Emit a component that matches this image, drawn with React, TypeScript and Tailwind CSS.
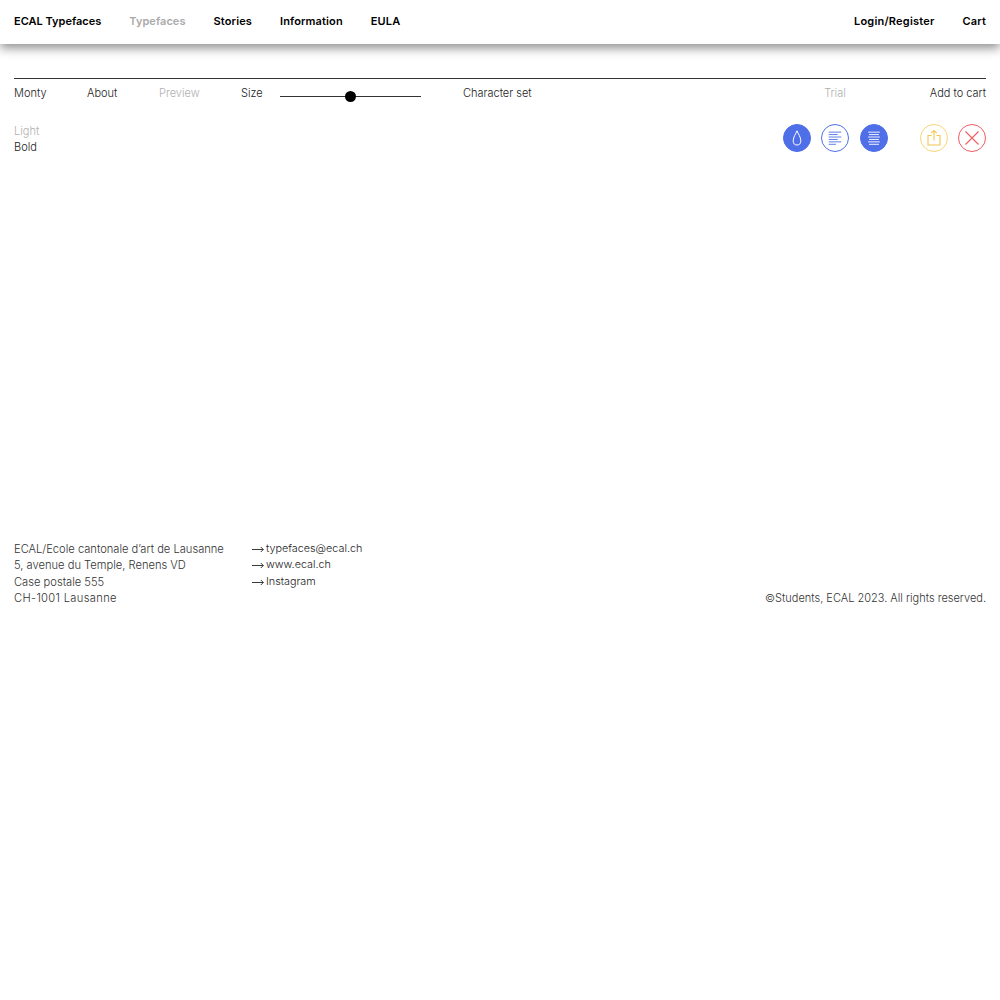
const font = "[font-family:Inter,'Liberation_Sans',sans-serif]";

function NavBar() {
  return (
    <header className="flex h-[44px] items-center justify-between bg-white px-[14px] pb-[2px] text-[11px] font-semibold tracking-[0.012em] text-black shadow-[0_4px_10px_rgba(0,0,0,0.45)]">
      <nav className="flex gap-[28px]">
        <span className="tracking-normal">ECAL Typefaces</span>
        <span className="tracking-[0.005em] text-[#aaaaaa]">Typefaces</span>
        <span>Stories</span>
        <span>Information</span>
        <span>EULA</span>
      </nav>
      <nav className="flex gap-[28px]">
        <span className="tracking-[0.02em]">Login/Register</span>
        <span>Cart</span>
      </nav>
    </header>
  );
}

function Slider() {
  return (
    <div className="relative ml-[17px] mt-[6px] h-px w-[141px] bg-[#333333]">
      <span className="absolute left-[65px] top-[-5px] size-[11px] rounded-full bg-black" />
    </div>
  );
}

function RoundButton({ filled, color, children }: { filled?: boolean; color: string; children: React.ReactNode }) {
  return (
    <button
      type="button"
      className="grid size-[28px] place-items-center rounded-full border"
      style={{ borderColor: color, backgroundColor: filled ? color : 'transparent' }}
    >
      {children}
    </button>
  );
}

function Lines({ color, centered }: { color: string; centered?: boolean }) {
  const rows = centered
    ? ['M3.5 3.5h13', 'M4.5 6.2h11', 'M3.5 8.9h13', 'M4.5 11.6h11', 'M3.5 14.3h13', 'M4.5 17h11']
    : ['M3 3.5h14', 'M3 6.2h10', 'M3 8.9h14', 'M3 11.6h10', 'M3 14.3h14', 'M3 17h8'];
  return (
    <svg className="size-[18px]" viewBox="0 0 20 20" fill="none" stroke={color} strokeWidth="1">
      {rows.map((d) => (
        <path d={d} key={d} />
      ))}
    </svg>
  );
}

function LinkRow({ children }: { children: React.ReactNode }) {
  return (
    <p className="flex">
      <svg className="mt-[5px] h-[7px] w-[12px] shrink-0" viewBox="0 0 12 7" fill="none" stroke="#222222" strokeWidth="0.9">
        <path d="M0 3.5h11.3M8.8 1l2.5 2.5L8.8 6" />
      </svg>
      <span className="ml-[2px]">{children}</span>
    </p>
  );
}

function Toolbar() {
  return (
    <section className="mx-[14px] mt-[34px] border-t border-[#333333] text-[11px] font-[350] text-[#222222]">
      <div className="flex h-[29px] items-center">
        <span className="w-[73px]">Monty</span>
        <span className="w-[72px]">About</span>
        <span className="w-[82px] text-[#b0b0b0]">Preview</span>
        <span className="w-[22px]">Size</span>
        <Slider />
        <span className="ml-[42px]">Character set</span>
        <span className="ml-auto text-[#b0b0b0]">Trial</span>
        <span className="ml-[84px]">Add to cart</span>
      </div>
      <div className="mt-[16px] flex items-start justify-between">
        <div className="mt-[-1px] leading-[16.4px]">
          <p className="text-[#b0b0b0]">Light</p>
          <p>Bold</p>
        </div>
        <div className="flex">
          <RoundButton filled color="#4f6fe8">
            <svg className="size-[16px]" viewBox="0 0 16 16" fill="none" stroke="#ffffff" strokeWidth="1">
              <path d="M8 0.8C6.8 4 4.2 7 4.2 10.8a3.8 4.2 0 0 0 7.6 0C11.8 7 9.2 4 8 0.8z" />
            </svg>
          </RoundButton>
          <div className="ml-[10px]">
            <RoundButton color="#4f6fe8">
              <Lines color="#4f6fe8" />
            </RoundButton>
          </div>
          <div className="ml-[11px]">
            <RoundButton filled color="#4f6fe8">
              <Lines color="#ffffff" centered />
            </RoundButton>
          </div>
          <div className="ml-[32px]">
            <RoundButton color="#f6d774">
              <svg className="size-[18px]" viewBox="0 0 18 18" fill="none" stroke="#f0c850" strokeWidth="1.1">
                <path d="M6.5 6.5H3v9.5h12V6.5h-3.5M9 11.5V1.5M6.2 4.2 9 1.5l2.8 2.7" />
              </svg>
            </RoundButton>
          </div>
          <div className="ml-[10px]">
            <RoundButton color="#ef5b63">
              <svg className="size-[16px]" viewBox="0 0 16 16" fill="none" stroke="#ef5b63" strokeWidth="1.1">
                <path d="M1.5 1.5l13 13M14.5 1.5l-13 13" />
              </svg>
            </RoundButton>
          </div>
        </div>
      </div>
    </section>
  );
}

function Footer() {
  return (
    <footer className="mx-[14px] mt-[385px] flex items-end justify-between text-[11.15px] font-[350] leading-[16.4px] text-[#333333]">
      <div className="flex">
        <div className="w-[238px]">
          <p>ECAL/Ecole cantonale d’art de Lausanne</p>
          <p>5, avenue du Temple, Renens VD</p>
          <p>Case postale 555</p>
          <p className="tracking-[0.03em]">CH-1001 Lausanne</p>
        </div>
        <div className="text-[10.8px] text-[#222222]">
          <LinkRow>typefaces@ecal.ch</LinkRow>
          <LinkRow>www.ecal.ch</LinkRow>
          <LinkRow>Instagram</LinkRow>
        </div>
      </div>
      <p className="text-[11px]">©Students, ECAL 2023. All rights reserved.</p>
    </footer>
  );
}

export default function App() {
  return (
    <div className={`min-h-[1000px] bg-white ${font}`}>
      <NavBar />
      <Toolbar />
      <Footer />
    </div>
  );
}
